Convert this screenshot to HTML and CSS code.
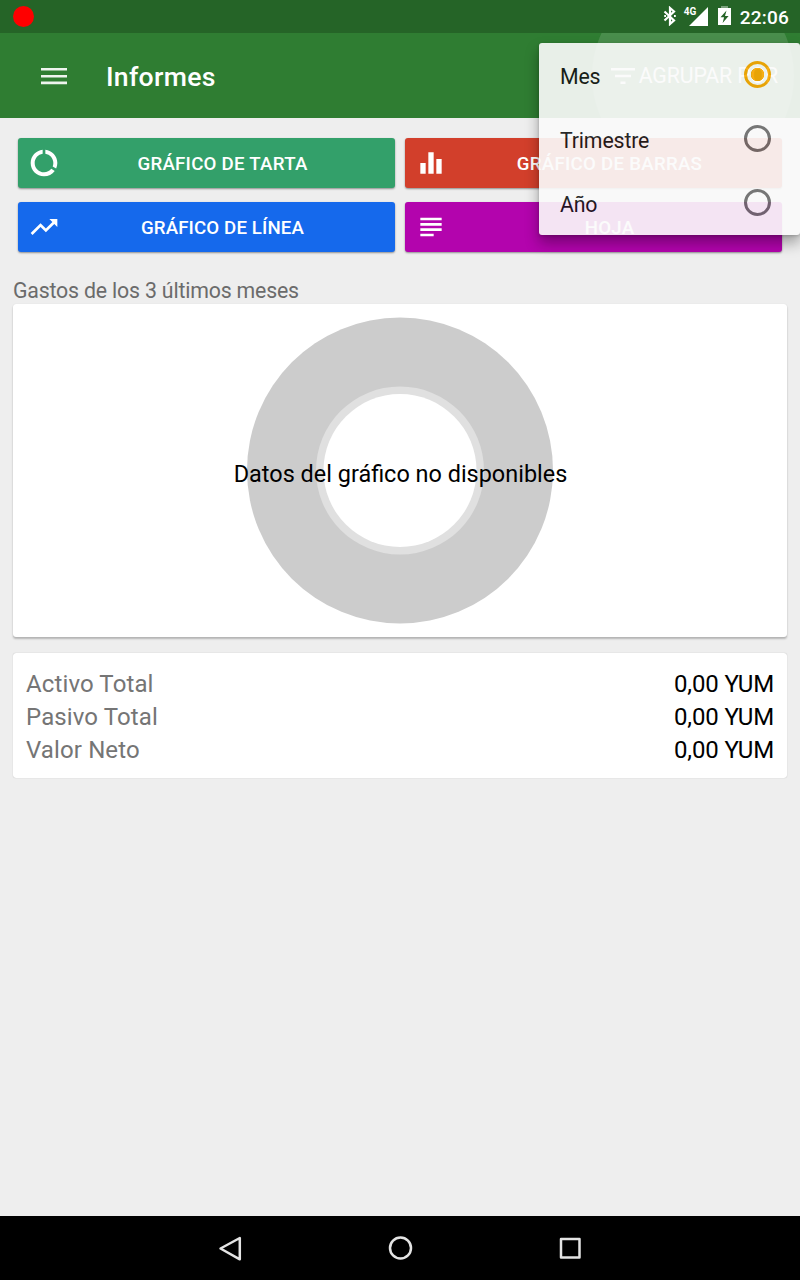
FILE: index.html
```html
<!DOCTYPE html>
<html lang="es">
<head>
<meta charset="utf-8">
<title>Informes</title>
<link rel="stylesheet" href="styles.css">
</head>
<body>
<div class="screen">
  <div class="status">
    <span class="record"></span>
    <div class="tray">
      <svg class="bluetooth" width="14" height="20" viewBox="0 0 14 20"><path d="M1.5 5.5 11 14.5 7 18V2l4 3.5-9.500 9" fill="none" stroke="#fff" stroke-width="2.200"/><path d="M1.200 10h1.800M11 10h1.800" stroke="#fff" stroke-width="2"/></svg>
      <div class="signal"><span class="net">4G</span><svg width="19" height="19" viewBox="0 0 19 19"><path d="M0 19 19 0V19Z" fill="#fff"/></svg></div>
      <svg class="battery" width="13" height="20" viewBox="0 0 13 20"><path d="M3 0h7v2H3z" fill="#7ca27d"/><path d="M0 2h13v17H0z" fill="#fff"/><path d="M8.500 4.500 2.500 11.200h3.600L4.600 17l6-7H7z" fill="#256427"/></svg>
      <span class="clock">22:06</span>
    </div>
  </div>
  <header class="toolbar">
    <svg class="burger" width="26" height="18" viewBox="0 0 26 18"><path d="M0 2.200h26M0 9.200h26M0 15.900h26" stroke="#fff" stroke-width="2.600" opacity=".92"/></svg>
    <h1 class="title">Informes</h1>
    <div class="group-action">
      <span class="ripple"></span>
      <svg width="24" height="16" viewBox="0 0 24 16"><path d="M0 1.300h24M4 8h16M9.500 14.700h5" stroke="#fff" stroke-width="2.600"/></svg>
      <span class="group-label">AGRUPAR POR</span>
    </div>
  </header>
  <main class="content">
    <div class="charts">
      <div class="chart-button pie">
        <svg width="32" height="32" viewBox="0 0 24 24"><path fill="#fff" d="M13 2.050v3.030c3.390.49 6 3.390 6 6.920 0 .9-.18 1.750-.48 2.540l2.600 1.530c.56-1.240.88-2.620.88-4.070 0-5.180-3.950-9.450-9-9.950zM12 19c-3.870 0-7-3.130-7-7 0-3.530 2.610-6.430 6-6.920V2.050c-5.060.5-9 4.760-9 9.950 0 5.520 4.470 10 9.990 10 3.310 0 6.240-1.610 8.060-4.090l-2.600-1.530C16.170 17.980 14.210 19 12 19z"/></svg>
        <span>GRÁFICO DE TARTA</span>
      </div>
      <div class="chart-button bars">
        <svg width="32" height="32" viewBox="0 0 24 24"><path fill="#fff" d="M10 20h4V4h-4v16zm-6 0h4v-8H4v8zM16 9v11h4V9h-4z"/></svg>
        <span>GRÁFICO DE BARRAS</span>
      </div>
      <div class="chart-button line">
        <svg width="32" height="32" viewBox="0 0 24 24"><path fill="#fff" d="M16 6l2.290 2.290-4.880 4.880-4-4L2 16.590 3.410 18l6-6 4 4 6.300-6.290L22 12V6z"/></svg>
        <span>GRÁFICO DE LÍNEA</span>
      </div>
      <div class="chart-button sheet">
        <svg width="32" height="32" viewBox="0 0 24 24"><path fill="#fff" d="M4 5h16v2H4zM4 9h16v2H4zM4 13h16v2H4zM4 17h10v2H4z"/></svg>
        <span>HOJA</span>
      </div>
    </div>
    <h2 class="caption">Gastos de los 3 últimos meses</h2>
    <section class="card chart">
      <svg class="donut" width="308" height="308" viewBox="0 0 308 308"><circle cx="154" cy="153.500" r="153" fill="#ccc"/><circle cx="154" cy="153.500" r="84" fill="#e0e0e0"/><circle cx="154" cy="153.500" r="76.500" fill="#fff"/></svg>
      <span class="empty">Datos del gráfico no disponibles</span>
    </section>
    <section class="card totals">
      <div class="row"><span>Activo Total</span><b>0,00 YUM</b></div>
      <div class="row"><span>Pasivo Total</span><b>0,00 YUM</b></div>
      <div class="row"><span>Valor Neto</span><b>0,00 YUM</b></div>
    </section>
  </main>
  <nav class="nav">
    <svg width="28" height="28" viewBox="0 0 28 28"><path d="M4.500 14.500 23.800 4v21.300z"/></svg>
    <svg width="28" height="28" viewBox="0 0 28 28"><circle cx="14.500" cy="14" r="10.500"/></svg>
    <svg width="28" height="28" viewBox="0 0 28 28"><path d="M5 5h18.500v18.500H5z"/></svg>
  </nav>
  <div class="menu">
    <div class="item"><span>Mes</span><i class="radio on"></i></div>
    <div class="item"><span>Trimestre</span><i class="radio"></i></div>
    <div class="item"><span>Año</span><i class="radio"></i></div>
  </div>
</div>
</body>
</html>
```

FILE: styles.css
```css
* { box-sizing: border-box; }
body { margin: 0; font-family: Roboto, "Liberation Sans", sans-serif; }
svg { display: block; flex: none; }
.screen { position: relative; display: flex; flex-direction: column; width: 800px; height: 1280px; overflow: hidden; background: #eee; }

.status { display: flex; justify-content: space-between; flex: none; height: 33px; padding: 0 11px 0 13px; background: #256427; color: #fff; }
.record { width: 21px; height: 21px; margin-top: 6px; border-radius: 50%; background: #f00; }
.tray { display: flex; align-items: flex-start; }
.bluetooth { margin: 6px 7px 0 0; }
.signal { display: flex; height: 26px; align-items: flex-end; margin-right: 10px; }
.net { align-self: flex-start; margin: 6px -7px 0 0; font-size: 10px; line-height: 12px; font-weight: 700; width: 12px; }
.battery { margin: 6px 9px 0 0; }
.clock { font-size: 19px; font-weight: 500; line-height: 35px; letter-spacing: .2px; }

.toolbar { display: flex; align-items: center; flex: none; height: 85px; padding: 0 22px 0 41px; background: #2f7d32; color: #fff; overflow: hidden; }
.title { margin: 2px 0 0 39px; font-size: 26.600px; font-weight: 500; letter-spacing: .3px; }
.group-action { position: relative; display: flex; align-items: center; gap: 4px; margin-left: auto; }
.ripple { position: absolute; left: -19px; top: -88px; width: 202px; height: 202px; border-radius: 50%; background: rgba(255,255,255,.13); }
.group-label { font-size: 21.300px; line-height: 26px; letter-spacing: -.13px; }

.content { flex: 1; padding: 20px 13px 0; }
.charts { display: grid; grid-template-columns: 377px 377px; gap: 14px 10px; padding: 0 5px; }
.chart-button { display: flex; align-items: center; height: 50px; padding-left: 10px; border-radius: 3px; color: #fff; font-size: 18.700px; font-weight: 500; letter-spacing: .25px; box-shadow: 0 1px 2px rgba(0,0,0,.4); }
.chart-button span { flex: 1; padding: 2px 10px 0 0; text-align: center; }
.pie { background: #33a06a; }
.bars { background: #d23f2b; }
.line { background: #1569ec; letter-spacing: .12px; }
.sheet { background: #b304ad; }

.caption { margin: 25px 0 0; font-size: 21.300px; line-height: 27px; font-weight: 400; letter-spacing: -.18px; color: #6b6b6b; }
.card { border-radius: 3px; background: #fff; }
.chart { display: grid; place-items: center; height: 333px; box-shadow: 0 2px 2px rgba(0,0,0,.24), 0 0 1px rgba(0,0,0,.15); }
.donut, .empty { grid-area: 1 / 1; }
.empty { padding: 7px 0 0 1px; font-size: 23.450px; color: #000; white-space: nowrap; }
.totals { height: 125px; margin-top: 16px; padding: 15px 13px; box-shadow: 0 0 1px rgba(0,0,0,.3); }
.row { display: flex; justify-content: space-between; font-size: 24px; line-height: 33px; letter-spacing: .12px; color: #757575; }
.row b { font-weight: 400; letter-spacing: -.12px; color: #000; }

.nav { display: flex; justify-content: center; align-items: center; gap: 142px; flex: none; height: 64px; background: #000; fill: none; stroke: #e4e4e4; stroke-width: 2.500; stroke-linejoin: round; }

/* popup above the toolbar and the chart buttons */
.menu { position: absolute; left: 539px; top: 43px; width: 261px; height: 192px; border-radius: 3px; background: #fbfbfb; opacity: .91; box-shadow: 0 8px 14px rgba(0,0,0,.36), 0 1px 3px rgba(0,0,0,.2); }
.item { display: flex; align-items: center; justify-content: space-between; height: 64px; padding: 0 29px 1px 21px; font-size: 21.300px; letter-spacing: -.15px; color: #151515; }
.item span { padding-top: 3px; }
.radio { width: 27px; height: 27px; border: 3px solid #6b6b6b; border-radius: 50%; }
.radio.on { border-color: #f7a600; background: radial-gradient(circle closest-side, #f7a600 6.500px, transparent 7px); }
```
